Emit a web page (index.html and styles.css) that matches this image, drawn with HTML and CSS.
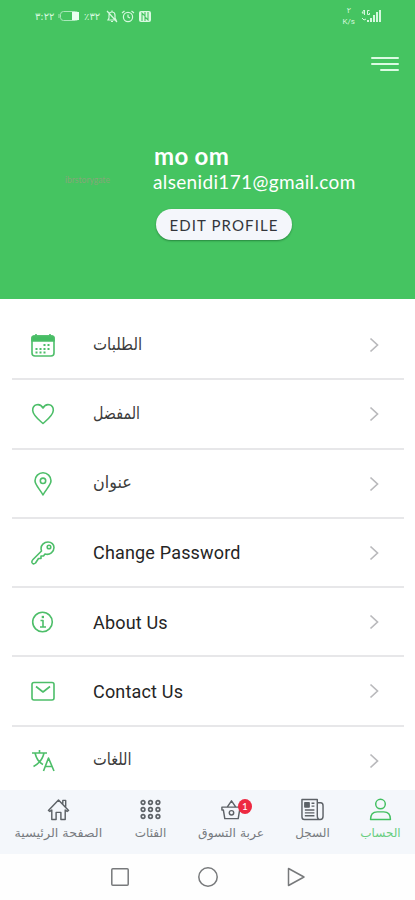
FILE: index.html
```html
<!DOCTYPE html>
<html lang="ar">
<head>
<meta charset="utf-8">
<meta name="viewport" content="width=device-width">
<title>الحساب</title>
<link rel="stylesheet" href="styles.css">
</head>
<body>
<div class="app">
<header class="hero">
  <div class="status">
    <div class="status-left">
      <span class="clock">٣:٢٢</span>
      <svg width="23" height="12" viewBox="0 0 23 12"><rect x="2.5" y="1.5" width="18" height="9" rx="3" fill="none" stroke="#a9e8ba"/><path d="M1 4v4" stroke="#a9e8ba"/><rect x="14" y="2" width="7" height="8" fill="#eafff0"/></svg>
      <span class="percent">٪٣٢</span>
      <svg width="12" height="13" viewBox="0 0 12 13" fill="none" stroke="#d5f8de" stroke-width="1.2"><path d="M2 10h8L9 8V5c0-4-6-4-6 0v3zM5 11.5h2M6 2V.5M1 1l10 11"/></svg>
      <svg width="14" height="13" viewBox="0 0 14 13" fill="none" stroke="#d5f8de" stroke-width="1.2"><circle cx="7" cy="7" r="4.6"/><path d="M7 4.5V7l2 1M1 3l2.5-2M13 3l-2.5-2"/></svg>
      <svg width="14" height="13" viewBox="0 0 14 13"><rect x="1" y="1" width="12" height="11" rx="2" fill="#d9f9e1"/><path d="M4 11V3l3 3v5M7 2v5l3 3V2" fill="none" stroke="#45c461" stroke-width="1.1"/></svg>
    </div>
    <div class="status-right">
      <div class="speed"><span>٢</span><span>K/s</span></div>
      <svg width="21" height="14" viewBox="0 0 21 14"><g fill="#d5f8de"><path d="M6 11h2v2H6zM9 9h2v4H9zM12 6h2v7h-2zM15 3h2v10h-2zM18 1h2v12h-2z"/></g><path d="M3 1L1 4h3M3.500 1v5M8.500 1.500H6.500v4h2V4M1 9l2 2 2-1" fill="none" stroke="#d5f8de"/></svg>
    </div>
  </div>
  <div class="menu"><i></i><i></i><i></i></div>
  <div class="profile">
    <div class="avatar">ibrstorygate</div>
    <div class="who">
      <div class="name">mo om</div>
      <div class="mail">alsenidi171@gmail.com</div>
      <div class="edit">EDIT PROFILE</div>
    </div>
  </div>
</header>
<main class="list">
  <div class="row">
    <svg class="ic" viewBox="0 0 24 24"><rect x="1" y="3" width="22" height="20" rx="3"/><path d="M1 8V5q0-2 2-2h18q2 0 2 2v3z" fill="#45bd63"/><path d="M5 1v4M19 1v4"/><path d="M12.500 12h2M16.500 12h2M4.500 16h2M8.500 16h2M12.500 16h2M16.500 16h2M4.500 19.500h2M8.500 19.500h2M12.500 19.500h2" stroke-width="2"/></svg>
    <span class="label ar orders" dir="rtl">الطلبات</span><svg class="chev" viewBox="0 0 10 16"><path d="M1.500 1.500L8.500 8l-7 6.500"/></svg>
  </div>
  <div class="row">
    <svg class="ic" viewBox="0 0 24 24"><path d="M12 21.500C8 18 2 13.500 1.700 8.500 1.500 2 9 .5 12 6c3-5.500 10.500-4 10.300 2.500C22 13.500 16 18 12 21.500z"/></svg>
    <span class="label ar favorites" dir="rtl">المفضل</span><svg class="chev" viewBox="0 0 10 16"><path d="M1.500 1.500L8.500 8l-7 6.500"/></svg>
  </div>
  <div class="row">
    <svg class="ic" viewBox="0 0 24 24"><path d="M12 23C9.500 18 4 13 4 8.800a8 8 0 0 1 16 0C20 13 14.500 18 12 23z"/><circle cx="12" cy="8.800" r="2.700"/></svg>
    <span class="label ar address" dir="rtl">عنوان</span><svg class="chev" viewBox="0 0 10 16"><path d="M1.500 1.500L8.500 8l-7 6.500"/></svg>
  </div>
  <div class="row">
    <svg class="ic" viewBox="0 0 24 24"><path d="M10.500 10C8.500 3.500 14 1 17 1c3.500 0 6 2.500 6 5.500 0 4-4 8-9 6.500l-1.500 2H10v2.500H7.500L4.500 22Q2 24 1 21.500q-.5-1.500 1-3z"/><circle cx="18" cy="6" r="1.800"/></svg>
    <span class="label">Change Password</span><svg class="chev" viewBox="0 0 10 16"><path d="M1.500 1.500L8.500 8l-7 6.500"/></svg>
  </div>
  <div class="row">
    <svg class="ic" viewBox="0 0 24 24"><circle cx="11.500" cy="12" r="9.800"/><path d="M9.500 10.500H12V17M9 17h6"/><path d="M10.700 7h2.300" stroke-width="2.300"/></svg>
    <span class="label">About Us</span><svg class="chev" viewBox="0 0 10 16"><path d="M1.500 1.500L8.500 8l-7 6.500"/></svg>
  </div>
  <div class="row">
    <svg class="ic" viewBox="0 0 24 24"><rect x="1" y="3.500" width="22" height="17.500" rx="2"/><path d="M5 7.500l7 5.500 7-5.500"/></svg>
    <span class="label">Contact Us</span><svg class="chev" viewBox="0 0 10 16"><path d="M1.500 1.500L8.500 8l-7 6.500"/></svg>
  </div>
  <div class="row">
    <svg class="ic" viewBox="0 0 24 24"><path d="M1 4h15M8.500 1v3M4 4c1 4 4 9.500 8 11.500M13 4c-1 5-5 10.500-10.500 13.500M12.500 22l5-13 5.500 13M14.200 17.500h7"/></svg>
    <span class="label ar languages" dir="rtl">اللغات</span><svg class="chev" viewBox="0 0 10 16"><path d="M1.500 1.500L8.500 8l-7 6.500"/></svg>
  </div>
</main>
<nav class="tabs">
  <div class="tab home"><svg viewBox="0 0 24 24"><path d="M1.500 13L12 2l10.500 11-1.500 1-2-1.500V22.500h-4.500V15h-5v7.500H5V12.500L3 14zM16.500 6V2.500h3V9"/></svg><span dir="rtl">الصفحة الرئيسية</span></div>
  <div class="tab grid"><svg viewBox="0 0 24 24"><circle cx="3.500" cy="4" r="2.100"/><circle cx="12" cy="4" r="2.100"/><circle cx="20.500" cy="4" r="2.100"/><circle cx="3.500" cy="12" r="2.100"/><circle cx="12" cy="12" r="2.100"/><circle cx="20.500" cy="12" r="2.100"/><circle cx="3.500" cy="20" r="2.100"/><circle cx="12" cy="20" r="2.100"/><circle cx="20.500" cy="20" r="2.100"/></svg><span dir="rtl">الفئات</span></div>
  <div class="tab cart"><svg viewBox="0 0 24 24"><path d="M2 9.500h20v3h-1.500L19 21.500H5L3.500 12.500H2zM7.500 9.500L12 3l4.500 6.500"/><circle cx="12" cy="15.500" r="2.300"/></svg><b class="badge">1</b><span dir="rtl">عربة التسوق</span></div>
  <div class="tab"><svg viewBox="0 0 24 24"><path d="M1 1.500h16v17q0 4 3 4H3.500q-2.500 0-2.500-3zM17 5h3.500q2.500 0 2.500 3v11q0 3.500-3 3.500"/><path d="M4 12.500h10M4 15.500h10M4 18.500h10M11 5.500h3M11 8.500h3"/><path d="M4 5h4.500v4.500H4z" fill="#5d6267"/></svg><span dir="rtl">السجل</span></div>
  <div class="tab active"><svg viewBox="0 0 24 24"><circle cx="12" cy="6.300" r="5"/><path d="M1.600 22.500q0-8 7-8h6.800q7 0 7 8z"/></svg><span dir="rtl">الحساب</span></div>
</nav>
<footer class="system">
  <svg width="20" height="20" viewBox="0 0 20 20"><rect x="1.800" y="1.800" width="16.400" height="16.400" rx="1"/></svg>
  <svg width="20" height="20" viewBox="0 0 20 20"><circle cx="10" cy="10" r="9.200"/></svg>
  <svg width="20" height="20" viewBox="0 0 20 20"><path d="M2.500 1.500v17L18 10z" stroke-linejoin="round"/></svg>
</footer>
</div>
</body>
</html>
```
FILE: styles.css
```css
* { box-sizing: border-box; }
body { margin: 0; background: #fff; font-family: Roboto, "DejaVu Sans", sans-serif; }
.app { width: 415px; height: 900px; display: flex; flex-direction: column; overflow: hidden; }
svg { display: block; flex: none; }
.hero { height: 299px; flex: none; background: #45c461; color: #fff; }
.status { height: 32px; padding: 0 33px 0 35px; display: flex; justify-content: space-between; align-items: center; color: #d5f8de; }
.status-left { display: flex; align-items: center; gap: 3px; font: 10px "DejaVu Sans", sans-serif; }
.clock { width: 20px; white-space: nowrap; }
.percent { width: 19px; white-space: nowrap; }
.status-right { display: flex; align-items: center; gap: 6px; }
.speed { display: flex; flex-direction: column; align-items: center; font: 8px/11px Roboto, "DejaVu Sans", sans-serif; }
.menu { display: flex; flex-direction: column; align-items: flex-end; gap: 4px; padding: 25px 16px 0 0; }
.menu i { width: 28px; height: 2px; background: #dbfbe2; border-radius: 1px; }
.menu i:last-child { width: 19px; }
.profile { display: flex; padding: 71px 0 0 65px; }
.avatar { width: 89px; padding-top: 33px; font: 8.5px/10px Lato, sans-serif; color: #83a878; }
.name { font: bold 24px/28px Lato, sans-serif; height: 28px; letter-spacing: .3px; }
.mail { font: 19px/24px Lato, sans-serif; height: 26px; letter-spacing: .35px; margin-left: -1px; }
.edit { width: 136px; height: 31px; margin: 13px 0 0 2px; border-radius: 16px; background: #f4f6fb; color: #33363b; font: 15px/33px Lato, sans-serif; text-align: center; letter-spacing: 1.1px; box-shadow: 0 1px 2px rgba(0,60,20,.45); white-space: nowrap; }
.list { height: 491px; flex: none; padding: 12px 11px 0 12px; overflow: hidden; }
.row { height: 69.25px; flex: none; border-bottom: 2px solid #e7e7e9; display: flex; align-items: center; padding: 1px 25px 0 19px; }
.row:last-child { border-bottom-color: transparent; }
.ic { width: 24px; height: 24px; margin-right: 38px; fill: none; stroke: #4dbe69; stroke-width: 1.6; stroke-linejoin: round; }
.label { font-size: 18px; line-height: 24px; letter-spacing: .18px; color: #252525; white-space: nowrap; margin-right: auto; padding-top: 1px; }
.ar { font: 17px/24px "DejaVu Sans", sans-serif; letter-spacing: 0; color: #3c3c3c; transform-origin: left center; padding: 0 0 3px; }
.orders { transform: scaleX(.88); }
.favorites { transform: scaleX(.84); }
.address { transform: scaleX(.94); }
.languages { transform: scaleX(.86); }
.chev { width: 10px; height: 16px; fill: none; stroke: #b9b9bc; stroke-width: 1.7; }
.tabs { height: 64px; flex: none; background: #f4f7fb; display: grid; grid-template-columns: 117px 67px 95px 67px 69px; }
.tab { position: relative; display: flex; flex-direction: column; align-items: center; padding-top: 8px; color: #777b80; }
.tab svg { width: 23px; height: 23px; fill: none; stroke: #5d6267; stroke-width: 1.5; stroke-linejoin: round; }
.grid svg { width: 21px; height: 23px; stroke-width: 1.9; }
.tab span { font: 12px/20px "DejaVu Sans", sans-serif; margin-top: 2px; white-space: nowrap; }
.home span { transform: scaleX(1.06); }
.cart span { transform: scaleX(1.03); }
.tab.active { color: #68ce80; }
.tab.active svg { stroke: #42bf60; }
.badge { position: absolute; left: 54px; top: 9px; width: 14px; height: 15px; border-radius: 50%; background: #ed2941; color: #fff; font: 10px/15px Lato, sans-serif; text-align: center; }
.system { height: 46px; flex: none; background: #fefefe; display: flex; justify-content: center; align-items: center; gap: 68px; }
.system svg { fill: none; stroke: #77797b; stroke-width: 1.5; }
```
